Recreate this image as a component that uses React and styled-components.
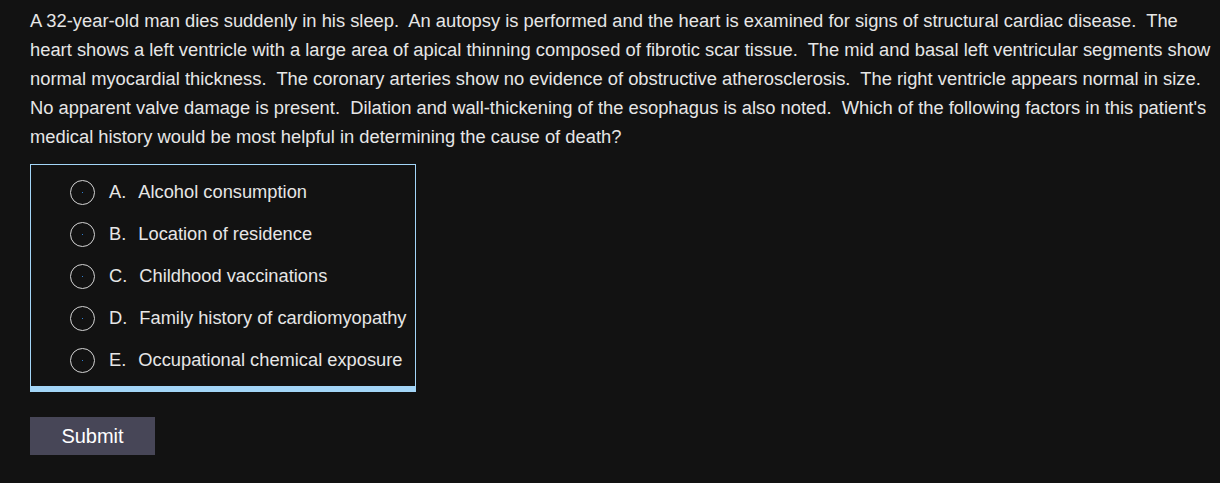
import styled, { createGlobalStyle } from "styled-components";

const GlobalStyle = createGlobalStyle`
  html, body {
    margin: 0;
    padding: 0;
    background-color: #121212;
  }
  body {
    font-family: "Liberation Sans", Arial, sans-serif;
  }
`;

const Page = styled.div`
  min-height: 483px;
  padding: 6px 4px 28px 30px;
  box-sizing: border-box;
  background-color: #121212;
  color: #e6e6e6;
`;

const Stem = styled.p`
  margin: 0;
  font-size: 18.35px;
  line-height: 29px;
  white-space: pre-wrap;
`;

const Choices = styled.div`
  width: 386px;
  box-sizing: border-box;
  margin-top: 13px;
  padding: 6px 0 5px 39px;
  border: 1px solid #a3d5f7;
  border-bottom-width: 6px;
`;

const Choice = styled.label`
  display: flex;
  align-items: center;
  height: 42px;
  font-size: 18.3px;
  color: #e6e6e6;
  cursor: pointer;
`;

const Radio = styled.span`
  position: relative;
  width: 25px;
  height: 25px;
  box-sizing: border-box;
  border: 1.5px solid #d4d4d4;
  border-radius: 50%;
  margin-right: 14px;
  flex-shrink: 0;

  &::after {
    content: "";
    position: absolute;
    left: 50%;
    top: 50%;
    width: 1px;
    height: 1px;
    margin: -0.5px 0 0 -0.5px;
    background-color: #2f7fd0;
  }
`;

const Letter = styled.span`
  margin-right: 12px;
`;

const SubmitButton = styled.button`
  display: block;
  margin-top: 25px;
  width: 125px;
  height: 38px;
  border: none;
  background-color: #474657;
  color: #ffffff;
  font-family: "Liberation Sans", Arial, sans-serif;
  font-size: 20px;
  cursor: pointer;
`;

const stem =
  "A 32-year-old man dies suddenly in his sleep.  An autopsy is performed and the heart is examined for signs of structural cardiac disease.  The heart shows a left ventricle with a large area of apical thinning composed of fibrotic scar tissue.  The mid and basal left ventricular segments show normal myocardial thickness.  The coronary arteries show no evidence of obstructive atherosclerosis.  The right ventricle appears normal in size.  No apparent valve damage is present.  Dilation and wall-thickening of the esophagus is also noted.  Which of the following factors in this patient's medical history would be most helpful in determining the cause of death?";

const options = [
  { id: "A", text: "Alcohol consumption" },
  { id: "B", text: "Location of residence" },
  { id: "C", text: "Childhood vaccinations" },
  { id: "D", text: "Family history of cardiomyopathy" },
  { id: "E", text: "Occupational chemical exposure" },
];

export default function App() {
  return (
    <>
      <GlobalStyle />
      <Page>
        <Stem>{stem}</Stem>
        <Choices>
          {options.map((o) => (
            <Choice key={o.id}>
              <Radio />
              <Letter>{o.id}.</Letter>
              {o.text}
            </Choice>
          ))}
        </Choices>
        <SubmitButton>Submit</SubmitButton>
      </Page>
    </>
  );
}
